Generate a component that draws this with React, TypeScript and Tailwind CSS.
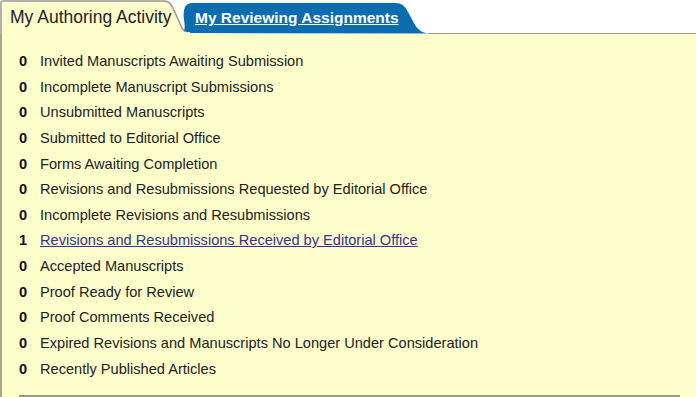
import React from "react";

const rows: [string, string, boolean?][] = [
  ["0", "Invited Manuscripts Awaiting Submission"],
  ["0", "Incomplete Manuscript Submissions"],
  ["0", "Unsubmitted Manuscripts"],
  ["0", "Submitted to Editorial Office"],
  ["0", "Forms Awaiting Completion"],
  ["0", "Revisions and Resubmissions Requested by Editorial Office"],
  ["0", "Incomplete Revisions and Resubmissions"],
  ["1", "Revisions and Resubmissions Received by Editorial Office", true],
  ["0", "Accepted Manuscripts"],
  ["0", "Proof Ready for Review"],
  ["0", "Proof Comments Received"],
  ["0", "Expired Revisions and Manuscripts No Longer Under Consideration"],
  ["0", "Recently Published Articles"],
];

export default function App() {
  return (
    <div
      className="w-[696px] h-[397px] bg-white overflow-hidden"
      style={{ fontFamily: '"Liberation Sans", Arial, sans-serif' }}
    >
      <div className="flex h-[34px] relative">
        <div className="relative w-[190px] h-[34px] z-10">
          <svg className="absolute inset-0" width="190" height="34" viewBox="0 0 190 34">
            <path d="M1 34 L1 3 Q1 1 3 1 L164 1 Q170 1 173 8 L181 26 Q184 33 190 34 Z" fill="#ffffcc" stroke="#999999" strokeWidth="1.5" />
            <rect x="2" y="32" width="188" height="3" fill="#ffffcc" />
          </svg>
          <span className="absolute left-[10px] top-[7px] text-[17.5px] leading-[20px] text-[#222]">
            My Authoring Activity
          </span>
        </div>
        <div className="relative w-[246px] h-[34px] -ml-[8px]">
          <svg className="absolute inset-0" width="246" height="34" viewBox="0 0 246 34">
            <path d="M0 33 Q4 31 2 20 Q0 3 10 3 L214 3 Q222 3 226 12 L233 25 Q237 32 246 33.5 Z" fill="#0b6db0" />
          </svg>
          <span className="absolute left-[13px] top-[8px] text-[15.5px] leading-[19px] font-bold text-white underline">
            My Reviewing Assignments
          </span>
        </div>
        <div className="flex-1 h-[34px] border-b border-[#999999]" />
      </div>
      <div className="bg-[#ffffcc] h-[363px] border-l-2 border-[#a8a890] pt-[15px] pl-[17px] pr-[16px]">
        {rows.map(([n, t, link], i) => (
          <div key={i} className="flex items-center h-[25.67px] text-[14.6px]">
            <span className="w-[21px] font-bold text-[#111]">{n}</span>
            {link ? (
              <a href="#" className="text-[#333399] underline">{t}</a>
            ) : (
              <span className="text-[#222]">{t}</span>
            )}
          </div>
        ))}
        <div className="mt-[12px] h-[2px] bg-[#999988]" />
      </div>
    </div>
  );
}
